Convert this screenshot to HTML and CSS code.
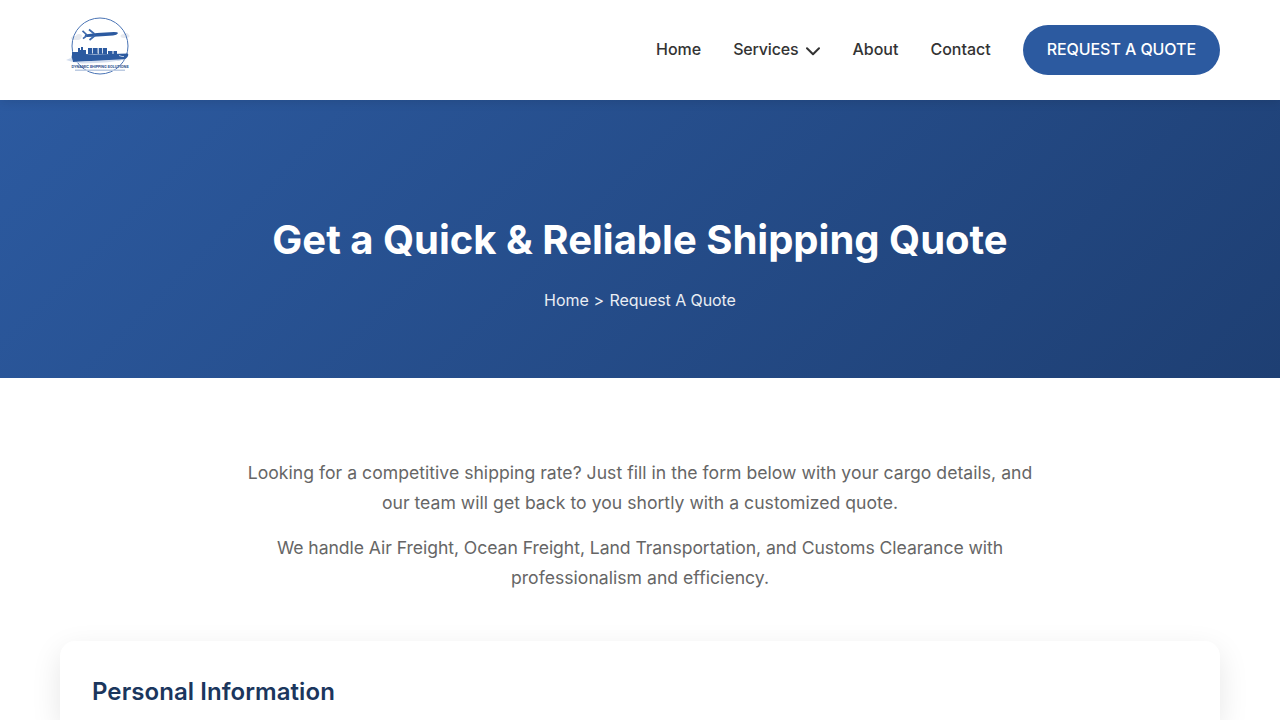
FILE: index.html
```html
<!DOCTYPE html>
<html lang="en">
<head>
<meta charset="utf-8">
<title>Request A Quote - Dynamic Shipping Solutions</title>
<link rel="stylesheet" href="styles.css">
</head>
<body>
<header class="header">
  <div class="container header-inner">
    <a class="logo" href="#">
      <svg width="80" height="80" viewBox="0 0 80 80" role="img" aria-label="Dynamic Shipping Solutions">
        <g fill="#e6e9ef">
          <ellipse cx="16" cy="28" rx="5" ry="2"/><ellipse cx="19" cy="26" rx="3" ry="2"/>
          <ellipse cx="65" cy="26" rx="4.5" ry="2"/><ellipse cx="66" cy="24.500" rx="2.500" ry="1.500"/>
        </g>
        <circle cx="40" cy="36" r="28" fill="none" stroke="#4a74b5" stroke-width="1"/>
        <path d="M25 24.500 L37 23 L54 22 Q58 22 58 23.300 Q57 25 53 25.500 L38 26.500 L27 27 Q24 26 25 24.500Z" fill="#2c5aa0"/>
        <path d="M34.500 24 L29 19.500 M35 25.500 L29.500 30 M27 25 L22.500 20.800 M27 25.500 L23 28.700" stroke="#3c68ac" stroke-width="1.700" fill="none"/>
        <path d="M12 45v-3h6v-4h2v2h1v-3h2v3h3v5z M28 38h10v6H28z M38.500 38h8.500v6h-8.500z M48 41h4.500v3H48z M53.500 41h3.500v3h-3.500z" fill="#2c5aa0"/>
        <path d="M32.500 38v5.500M38 38v5.500M42.500 38v5.500" stroke="#fff" stroke-width=".8"/>
        <path d="M12 44.500 Q27 43.500 34 44.500 L68 43.500 Q69 46 66 48.500 Q63 50.500 52 50.500 L13 52 Q11 49 12 44.500Z" fill="#2c5aa0"/>
        <path d="M6 50 Q10 48 12 48 L13 52 L67 49 Q51 53 22 53.500 Q14 53 6 50Z" fill="#d5dfef"/>
        <path d="M59 45.500l3 1h2" stroke="#dce6f5" stroke-width=".8" fill="none"/>
        <text x="40" y="57.800" text-anchor="middle" textLength="57" lengthAdjust="spacingAndGlyphs" class="logo-name">DYNAMIC SHIPPING SOLUTIONS</text>
        <path d="M15 60.300h50" stroke="#bccbe2" stroke-width="1.600"/>
      </svg>
    </a>
    <nav class="nav">
      <a href="#">Home</a>
      <a href="#" class="has-menu"><span>Services</span>
        <svg width="14" height="14" viewBox="0 0 14 14" fill="none" stroke="#333" stroke-width="2" stroke-linecap="round" stroke-linejoin="round"><path d="M1 4.200l6 6 6-6"/></svg>
      </a>
      <a href="#">About</a>
      <a href="#">Contact</a>
      <a href="#" class="btn-quote">REQUEST A QUOTE</a>
    </nav>
  </div>
</header>
<main>
  <section class="hero">
    <h1>Get a Quick &amp; Reliable Shipping Quote</h1>
    <p class="breadcrumb"><a href="#">Home</a> &gt; <span>Request A Quote</span></p>
  </section>
  <section class="quote">
    <div class="container">
      <div class="intro">
        <p>Looking for a competitive shipping rate? Just fill in the form below with your cargo details, and our team will get back to you shortly with a customized quote.</p>
        <p>We handle Air Freight, Ocean Freight, Land Transportation, and Customs Clearance with professionalism and efficiency.</p>
      </div>
      <form class="quote-form">
        <h2>Personal Information</h2>
      </form>
    </div>
  </section>
</main>
</body>
</html>
```
FILE: styles.css
```css
* { margin: 0; padding: 0; box-sizing: border-box; }
body {
  display: flex;
  flex-direction: column;
  height: 720px;
  overflow: hidden;
  font-family: Inter, "Liberation Sans", sans-serif;
  font-size: 16px;
  line-height: 1.6;
  color: #333;
  background: #fff;
}
a { color: inherit; text-decoration: none; }
.container { width: 100%; max-width: 1200px; margin: 0 auto; padding: 0 20px; }
.header {
  position: relative;
  z-index: 1;
  flex: none;
  height: 100px;
  background: #fff;
  box-shadow: 0 2px 10px rgba(0, 0, 0, .1);
}
.header-inner { display: flex; align-items: center; justify-content: space-between; height: 100px; }
.logo, .logo svg { display: block; }
.logo-name { font-size: 4px; font-weight: 700; fill: #2c4f8c; }
.nav { display: flex; align-items: center; gap: 32px; font-weight: 500; }
.has-menu { display: flex; align-items: center; gap: 8px; letter-spacing: -.18px; }
.has-menu svg { margin-top: 2px; }
.btn-quote { padding: 12px 24px; border-radius: 25px; background: #2c5aa0; color: #fff; letter-spacing: -.08px; }
main { display: flex; flex: 1; flex-direction: column; min-height: 0; }
.hero {
  flex: none;
  height: 278px;
  padding-top: 108px;
  text-align: center;
  color: #fff;
  background: linear-gradient(135deg, #2c5aa0 0%, #1e3f73 100%);
}
.hero h1 { font-size: 40px; font-weight: 700; line-height: 64px; }
.breadcrumb { margin-top: 16px; line-height: 25.6px; opacity: .9; }
.breadcrumb span { margin-left: 1px; letter-spacing: -.07px; }
.quote { flex: 1; min-height: 0; padding-top: 80px; }
.intro { max-width: 800px; margin: 0 auto 48px; text-align: center; font-size: 17.6px; line-height: 30px; color: #666; letter-spacing: .02px; }
.intro p + p { margin-top: 15px; }
.intro p + p::first-line { letter-spacing: -.06px; }
.quote-form {
  height: 79px;
  padding: 32px 32px 0;
  border-radius: 15px 15px 0 0;
  background: #fff;
  box-shadow: 0 10px 30px rgba(0, 0, 0, .1);
}
.quote-form h2 { font-size: 24px; font-weight: 600; line-height: 38.4px; letter-spacing: .07px; color: #1b365d; }
```
